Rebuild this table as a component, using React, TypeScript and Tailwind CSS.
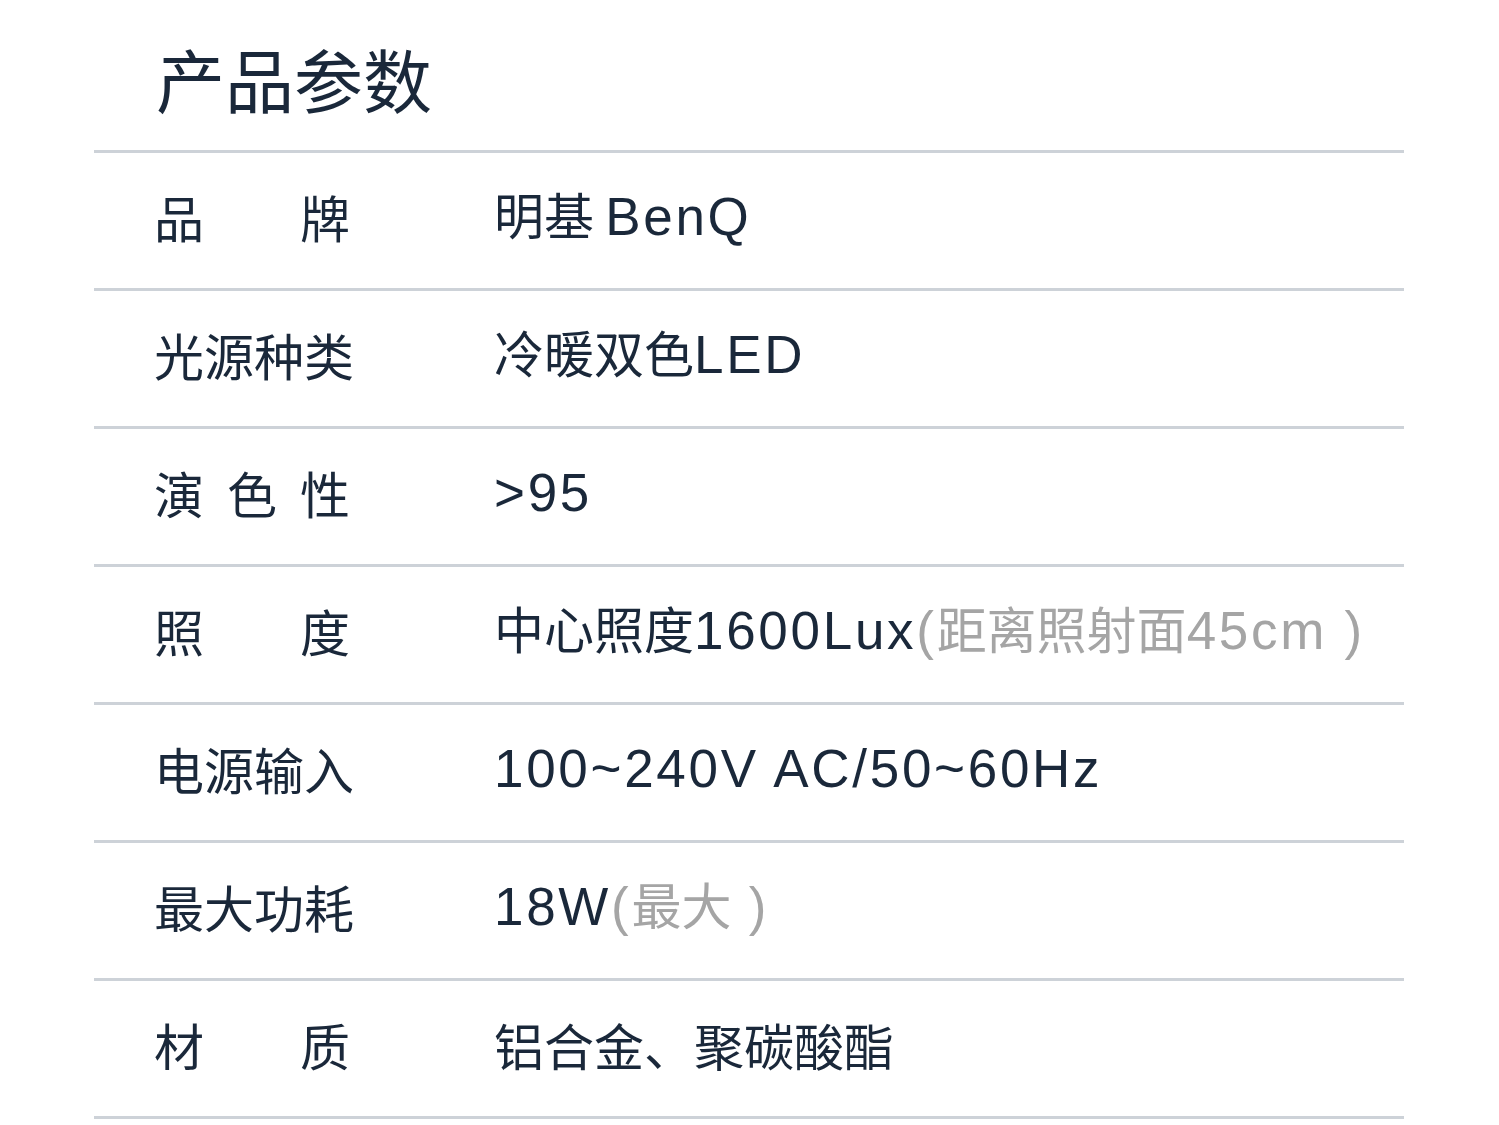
const L = ({ children }: { children: React.ReactNode }) => (
  <span className="font-['Liberation_Sans'] text-[53px] tracking-[2.7px]">{children}</span>
);

const Gray = ({ children }: { children: React.ReactNode }) => (
  <span className="text-[#a5a5a5]">{children}</span>
);

const rows: { label: string[]; value: React.ReactNode }[] = [
  { label: ["品", "牌"], value: <>明基 <L>BenQ</L></> },
  { label: ["光", "源", "种", "类"], value: <>冷暖双色<L>LED</L></> },
  { label: ["演", "色", "性"], value: <L>&gt;95</L> },
  {
    label: ["照", "度"],
    value: (
      <>
        中心照度<L>1600Lux</L>
        <Gray>
          <L>(</L>距离照射面<L>45cm )</L>
        </Gray>
      </>
    ),
  },
  { label: ["电", "源", "输", "入"], value: <L>100~240V AC/50~60Hz</L> },
  {
    label: ["最", "大", "功", "耗"],
    value: (
      <>
        <L>18W</L>
        <Gray>
          <L>(</L>最大<L> )</L>
        </Gray>
      </>
    ),
  },
  { label: ["材", "质"], value: <>铝合金、聚碳酸酯</> },
];

const App = () => {
  return (
    <div
      className="w-[1499px] h-[1125px] bg-white text-[#1a283a] overflow-hidden"
      style={{ fontFamily: '"Noto Sans CJK SC", "Noto Sans", sans-serif' }}
    >
      <div className="ml-[94px] w-[1310px]">
        {/* Title */}
        <div className="h-[150px] flex items-center pl-[62px] pt-[6px]">
          <h1 className="text-[69px] leading-none font-normal">产品参数</h1>
        </div>

        {/* Spec rows */}
        {rows.map((row, i) => (
          <div
            key={i}
            className="h-[138px] border-t-[3px] border-[#cdd2d8] flex items-center pb-[10px]"
          >
            <div className="ml-[60px] w-[196px] flex justify-between text-[50px] leading-none">
              {row.label.map((ch, j) => (
                <span key={j}>{ch}</span>
              ))}
            </div>
            <div className="ml-[144px] text-[50px] leading-none whitespace-nowrap">
              {row.value}
            </div>
          </div>
        ))}
        <div className="border-t-[3px] border-[#cdd2d8]" />
      </div>
    </div>
  );
};

export default App;
